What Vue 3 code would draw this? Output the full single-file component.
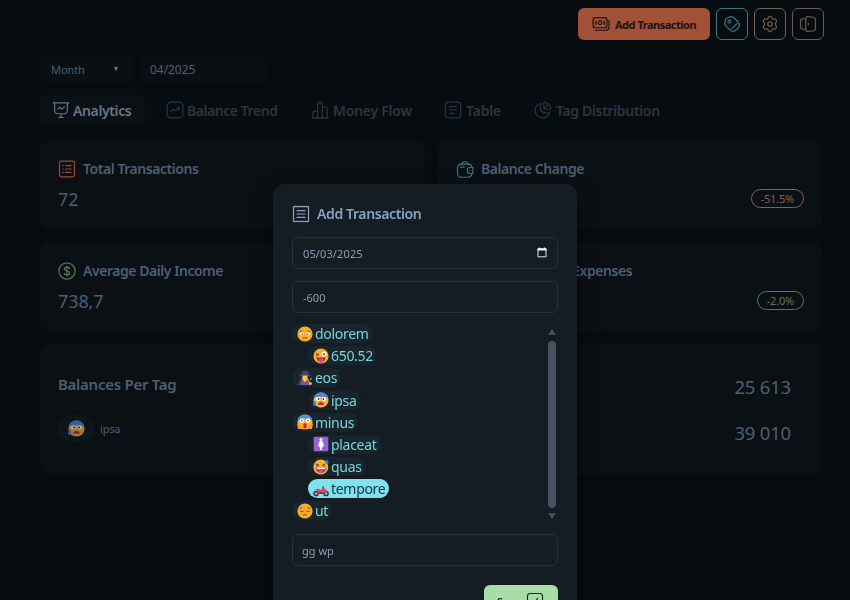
<script setup>
const tabs = [
  { label: 'Analytics', icon: 'board', cls: 'analytics active' },
  { label: 'Balance Trend', icon: 'trend', cls: 'balance' },
  { label: 'Money Flow', icon: 'bars', cls: 'money' },
  { label: 'Table', icon: 'doc', cls: 'table' },
  { label: 'Tag Distribution', icon: 'pie', cls: 'distribution' },
]
const cards = [
  { title: 'Total Transactions', icon: 'list', tone: 'orange', value: '72' },
  { title: 'Balance Change', icon: 'wallet', tone: 'cyan', value: '', delta: '-51.5%', deltaTone: 'down' },
  { title: 'Average Daily Income', icon: 'dollar', tone: 'green', value: '738,7' },
  { title: 'Average Daily Expenses', icon: 'dollar', tone: 'orange', value: '', delta: '-2.0%', deltaTone: 'up' },
]
const tags = [
  { name: 'dolorem', emoji: 'sad', level: 0 },
  { name: '650.52', emoji: 'wink', level: 1 },
  { name: 'eos', emoji: 'mage', level: 0 },
  { name: 'ipsa', emoji: 'anxious', level: 1 },
  { name: 'minus', emoji: 'scream', level: 0 },
  { name: 'placeat', emoji: 'restroom', level: 1 },
  { name: 'quas', emoji: 'sweat', level: 1 },
  { name: 'tempore', emoji: 'moto', level: 1, selected: true },
  { name: 'ut', emoji: 'pensive', level: 0 },
]
</script>

<template>
  <div class="page">
    <svg class="defs" aria-hidden="true">
      <symbol id="cash" viewBox="0 0 24 24"><rect x="1.500" y="3.500" width="18.500" height="13.500" rx="3"/><path d="M4.500 20.300H18c3.500 0 4.700-1.300 4.700-4.800V7.500"/><circle cx="10.800" cy="10.300" r="2.500"/><path d="M5.300 8v4.600M16.300 8v4.600"/></symbol>
      <symbol id="tag" viewBox="0 0 24 24"><path d="M4.700 15.500C2.800 13.600 1.800 12.600 2.200 10.800L3.300 6.500C3.800 4.500 4.500 3.800 6.500 3.300L10.800 2.200C12.600 1.800 13.600 2.800 15.500 4.700L18.500 7.700C21 10.200 22 11.500 22 13.500S21 16.500 18.500 19 15.500 22 13.500 22 10.200 21 7.700 18.500Z"/><circle cx="8.600" cy="8.800" r="2"/><path d="m11.500 18.500 7-7"/></symbol>
      <symbol id="gear" viewBox="0 0 24 24"><circle cx="12" cy="12" r="3"/><path d="M9.700 3.200C10 2.200 11 2 12 2s2 .2 2.300 1.200c.3 1 .1 1.600 1 2.100.9.500 1.500.1 2.400-.2 1.100-.4 1.700.3 2.300 1.300.7 1.200 1.200 2 .4 2.900-.7.700-1.300 1-1.300 2.700s.6 2 1.300 2.700c.8.900.3 1.700-.4 2.900-.6 1-1.200 1.700-2.300 1.300-.9-.3-1.500-.7-2.400-.2-.9.500-.7 1.100-1 2.100C14 21.800 13 22 12 22s-2-.2-2.300-1.200c-.3-1-.1-1.600-1-2.100-.9-.5-1.500-.1-2.400.2-1.100.4-1.700-.3-2.300-1.300-.7-1.200-1.200-2-.4-2.900.7-.7 1.300-1 1.300-2.700s-.6-2-1.300-2.700c-.8-.9-.3-1.700.4-2.900.6-1 1.200-1.700 2.300-1.300.9.300 1.500.7 2.400.2.900-.5.700-1.100 1-2.100Z"/></symbol>
      <symbol id="door" viewBox="0 0 24 24"><path d="M9 6c0-2.300 0-3 1.200-3.600 1-.5 2.300-.3 4.900 0l2.200.3C20.500 3.100 22 3.700 22 6.500v11c0 2.800-1.500 3.400-4.700 3.800l-2.200.3c-2.600.3-3.900.5-4.900 0C9 21 9 20.300 9 18Z"/><path d="M9 5H6C3 5 2 6 2 9v6c0 3 1 4 4 4h3M12.500 11v2"/></symbol>
      <symbol id="board" viewBox="0 0 24 24"><path d="M1.500 2.500h21M3.500 2.500V12c0 4 1 5 5 5h7c4 0 5-1 5-5V2.500M12 17v4.500M9 22h6M7.500 10.800 10 8.500l3 2.300 3.500-2.800"/></symbol>
      <symbol id="trend" viewBox="0 0 24 24"><rect x="1.500" y="1.500" width="21" height="21" rx="5"/><path d="m6.500 14 3-3 3.500 2.500 4.500-4M14.500 9h3v3"/></symbol>
      <symbol id="bars" viewBox="0 0 24 24"><path d="M1 22.500h22M2.500 22.500v-7c0-1.500.5-2 2-2H7c1.200 0 1.800.5 1.800 2v7M8.800 22.500V4c0-2 .5-2.500 3.200-2.500s3.200.5 3.200 2.500v18.500M15.200 22.500V10c0-1.500.6-2 2-2h2.300c1.500 0 2 .5 2 2v12.500"/></symbol>
      <symbol id="doc" viewBox="0 0 24 24"><rect x="1.800" y="1.500" width="20.400" height="21" rx="4.500"/><path d="M7.500 7.500h9M7.500 12h9M7.500 16.500h6"/></symbol>
      <symbol id="pie" viewBox="0 0 24 24"><path d="M9 3.300C4.800 4.500 1.500 8 1.500 12.500c0 5.500 4.500 10 10 10 4.500 0 8.300-3 9.500-7.500-1 1-2.500 1-4.500 1-4.500 0-7.500-2-7.500-6.500ZM13 3c0-1 .7-1.500 2-1.200 3 .6 6.200 3.500 7.200 7.200.3 1.500 0 2-1.200 2h-5c-2 0-3-1-3-3Z"/><path d="M14 10c0-2 4-1 4-5"/></symbol>
      <symbol id="list" viewBox="0 0 24 24"><rect x="2" y="1.500" width="20" height="21" rx="2.500"/><path d="M6.500 7.500h.5M10 7.500h7.500M6.500 12h.5M10 12h7.500M6.500 16.500h.5M10 16.500h7.500"/></symbol>
      <symbol id="receipt" viewBox="0 0 24 24"><path d="M2 2.200 4 1.800l2 .6 2-.6 2 .6 2-.6 2 .6 2-.6 2 .6 2-.6 2 .4v19.600l-2 .4-2-.6-2 .6-2-.6-2 .6-2-.6-2 .6-2-.6-2 .6-2-.4ZM6.800 7.500h10.400M6.800 12h10.400M6.800 16.500h10.400"/></symbol>
      <symbol id="wallet" viewBox="0 0 24 24"><path d="M21 10V9c-.3-3-1.700-3.500-5-3.500H8C3.500 5.500 2 7 2 11v5.500C2 21.500 3.500 23 8 23h7c4 0 6-1 6-5M22.500 10h-4c-2 0-3.500 1.700-3.500 4s1.500 4 3.500 4h4ZM6 9.500h5M6.500 5.500 10 2.800c1.500-1.200 2.500-1.200 4 0l3.500 2.700M18.500 14h.1"/></symbol>
      <symbol id="dollar" viewBox="0 0 24 24"><circle cx="12" cy="12" r="10.800"/><path d="M12 5.500v13M15.500 9c0-1.500-1.500-2.200-3.500-2.200S8.500 7.800 8.500 9.400c0 3.600 7 1.600 7 5.200 0 1.600-1.500 2.600-3.500 2.600S8.500 16.400 8.500 15"/></symbol>
      <symbol id="check" viewBox="0 0 24 24"><rect x="2" y="2" width="20" height="20" rx="3.500"/><path d="m8.500 12.500 2.500 3 4.500-7"/></symbol>

      <symbol id="sad" viewBox="0 0 16 16"><circle cx="8" cy="8" r="7.600" fill="#fcae2b"/><ellipse cx="4.800" cy="8" rx="1.900" ry="1.400" fill="#fff"/><ellipse cx="11.200" cy="8" rx="1.900" ry="1.400" fill="#fff"/><circle cx="5.200" cy="8.300" r=".7" fill="#503a38"/><circle cx="10.800" cy="8.300" r=".7" fill="#503a38"/><path d="M2.500 6 5.500 4.500M10.500 4.500l3 1.500M5.500 12.200q2.500-1.200 5 0" stroke="#704330" fill="none" stroke-width=".9"/></symbol>
      <symbol id="wink" viewBox="0 0 16 16"><circle cx="8" cy="8" r="7.600" fill="#fcae2b"/><circle cx="11" cy="6" r="2.500" fill="#fff"/><circle cx="11" cy="6.200" r="1" fill="#443"/><path d="m3 5.500 3 1-3 1.200" stroke="#654036" fill="none"/><path d="M3.500 9.500h9c-.5 3-2 4.500-4.500 4.500S4 12.500 3.500 9.500" fill="#762c4b"/><path d="M5.500 10.500h5v3q-2.500 2.800-5 0Z" fill="#f13d94"/></symbol>
      <symbol id="mage" viewBox="0 0 16 16"><path d="M4 4.500 5.500 1 11 .8l1 3.700 2 .8v1H2v-1ZM4 7l2 0-1 8H0l3-4Z" fill="#4d3e68"/><path d="M5.500 5.500h5V10L8 12.500 5.500 10Z" fill="#ffc83d"/><path d="m5 10 3 2.500 2.500-2L12 15H3.500Z" fill="#7c53b0"/><path d="m10 8 2.500 5" stroke="#d09039" stroke-width="1.500"/><circle cx="13.800" cy="9" r="1.100" fill="#25aaf4"/><circle cx="13.300" cy="13.500" r="1.600" fill="#f4b34b"/></symbol>
      <symbol id="anxious" viewBox="0 0 16 16"><circle cx="8" cy="8" r="7.600" fill="#fcaf2d"/><path d="M.8 6C2-1.500 14-1.500 15.200 6 12 4.200 4 4.200.8 6" fill="#4d83e3"/><ellipse cx="5" cy="7" rx="2.300" ry="1.900" fill="#fff"/><ellipse cx="11" cy="7" rx="2.300" ry="1.900" fill="#fff"/><circle cx="5.600" cy="7" r=".9" fill="#433"/><circle cx="10.400" cy="7" r=".9" fill="#433"/><path d="M5 13c0-4 6-4 6 0Z" fill="#a93250"/><path d="M1.500 8.500c2.300 3 1.700 5.500 0 5.500S-.6 11.500 1.500 8.500" fill="#3b82e9"/></symbol>
      <symbol id="scream" viewBox="0 0 16 16"><circle cx="8" cy="8" r="7.600" fill="#fcae2b"/><path d="M.6 7C1-1.500 15-1.500 15.400 7 12 4 4 4 .6 7" fill="#4c94df"/><circle cx="5" cy="6.500" r="2.200" fill="#fff"/><circle cx="11" cy="6.500" r="2.200" fill="#fff"/><circle cx="5" cy="6.500" r=".7" fill="#433"/><circle cx="11" cy="6.500" r=".7" fill="#433"/><ellipse cx="8" cy="11.800" rx="1.800" ry="2.700" fill="#b42c63"/><path d="m0 9.500 3 1.500 2 4H1ZM16 9.500 13 11l-2 4h4Z" fill="#ff9130"/></symbol>
      <symbol id="restroom" viewBox="0 0 16 16"><rect x=".7" y=".7" width="14.600" height="14.600" rx="1.200" fill="#9265cf"/><circle cx="8" cy="3.400" r="1.500" fill="#fff"/><path d="M6.500 5.200h3L11 10l-1 .4-.8-2 .6 2.800h-.9V14H7.100v-2.800h-.9l.6-2.800-.8 2L5 10Z" fill="#fff"/></symbol>
      <symbol id="sweat" viewBox="0 0 16 16"><circle cx="7.800" cy="8" r="7.500" fill="#fcae2b"/><path d="m3 5 3 1.200L3 7.500M12 5 9.500 6.200l2.500 1.300" stroke="#654036" fill="none"/><path d="M3 9h10c-.4 3-2 4.800-5 4.800S3.400 12 3 9" fill="#8a245c"/><path d="M4 9h8v1.300H4Z" fill="#fff"/><path d="M5 12q3-2 6 0-3 3-6 0" fill="#f13d94"/><path d="M14 .2c2.400 3 1.600 5 .1 5S12 3.200 14 .2" fill="#3b72e9"/></symbol>
      <symbol id="moto" viewBox="0 0 16 16"><circle cx="3" cy="12.500" r="2.200" fill="#8aa0ab" stroke="#35353f" stroke-width="1.300"/><circle cx="13" cy="12.500" r="2.200" fill="#8aa0ab" stroke="#35353f" stroke-width="1.300"/><path d="M2 8h4l2 1 2-3 2 2 3 2.500-2 .5-3-1-1 3H6L4 9.500Z" fill="#f23d57"/><path d="M6 11h4v2H6Z" fill="#5d4458"/><path d="M9 6h2" stroke="#433"/></symbol>
      <symbol id="pensive" viewBox="0 0 16 16"><circle cx="8" cy="8" r="7.600" fill="#fcae2b"/><path d="m2.500 5.800 2.700-1.300M10.800 4.500l2.700 1.300M3 8q1.700 1.300 3.500 0M9.500 8q1.800 1.300 3.500 0M6.200 12q1.800-.7 3.600 0" stroke="#674334" fill="none" stroke-width=".9"/></symbol>
    </svg>

    <header class="toolbar">
      <button class="add"><svg class="icon"><use href="#cash"/></svg><span>Add Transaction</span></button>
      <button class="square cyan"><svg class="icon"><use href="#tag"/></svg></button>
      <button class="square gold"><svg class="icon"><use href="#gear"/></svg></button>
      <button class="square rose"><svg class="icon"><use href="#door"/></svg></button>
    </header>

    <main>
      <div class="filters">
        <div class="select"><span>Month</span><i class="caret"></i></div>
        <div class="period">04/2025</div>
      </div>
      <nav class="tabs">
        <div v-for="t in tabs" :key="t.label" class="tab" :class="t.cls">
          <svg class="icon"><use :href="'#' + t.icon"/></svg><span>{{ t.label }}</span>
        </div>
      </nav>
      <section class="grid">
        <article v-for="c in cards" :key="c.title" class="card">
          <h3><svg class="icon" :class="c.tone"><use :href="'#' + c.icon"/></svg><span>{{ c.title }}</span></h3>
          <div class="figures">
            <span class="value">{{ c.value }}</span>
            <span v-if="c.delta" class="delta" :class="c.deltaTone">{{ c.delta }}</span>
          </div>
        </article>
        <article class="card balances">
          <div class="line"><h2>Balances Per Tag</h2><span class="value">25 613</span></div>
          <div class="line">
            <div class="owner"><span class="avatar"><svg class="emoji"><use href="#anxious"/></svg></span><span>ipsa</span></div>
            <span class="value">39 010</span>
          </div>
        </article>
      </section>
    </main>

    <div class="overlay">
      <form class="modal" @submit.prevent>
        <h3 class="heading"><svg class="icon"><use href="#receipt"/></svg><span>Add Transaction</span></h3>
        <div class="field date"><span>05/03/2025</span>
          <svg class="calendar" viewBox="0 0 10 11"><path d="M1 1.800h8v8H1Z" fill="none" stroke="#e6e6e6" stroke-width="1"/><path d="M.5 1.500h9v2h-9ZM2 .4h1v2H2ZM7 .4h1v2H7Z" fill="#f2f2f2"/></svg>
        </div>
        <div class="field amount">-600</div>
        <div class="picker">
          <ul>
            <li v-for="t in tags" :key="t.name" :class="{ child: t.level, selected: t.selected }">
              <span class="chip"><svg class="emoji"><use :href="'#' + t.emoji"/></svg><span>{{ t.name }}</span></span>
            </li>
          </ul>
          <div class="scroll"><i class="up-arrow"></i><i class="thumb"></i><i class="down-arrow"></i></div>
        </div>
        <div class="field note">gg wp</div>
        <button class="save"><span>Save</span><svg class="icon"><use href="#check"/></svg></button>
      </form>
    </div>
  </div>
</template>

<style>
body { background: #070c10; overflow: hidden; }
</style>

<style scoped>
* { box-sizing: border-box; }
.page { height: 600px; overflow: hidden; background: #070c10; color: #4c5f74; font-family: "Noto Sans", "Open Sans", sans-serif; }
.defs { position: absolute; width: 0; height: 0; }
.icon { width: 18px; height: 18px; fill: none; stroke: currentColor; stroke-width: 1.6; stroke-linecap: round; stroke-linejoin: round; flex: none; }
.emoji { width: 16px; height: 16px; flex: none; }
button { font-family: inherit; margin: 0; }
h2, h3 { margin: 0; font-weight: 600; }
.toolbar { display: flex; justify-content: flex-end; gap: 6px; height: 40px; padding: 8px 26px 0 0; }
.add { width: 132px; height: 32px; display: flex; align-items: center; padding: 0 0 0 14px; gap: 5px; border: 0; border-radius: 6px; background: #a05137; color: #1d110e; font-size: 11px; font-weight: 700; letter-spacing: -0.49px; white-space: nowrap; }
.square { width: 32px; height: 32px; padding: 0; display: flex; align-items: center; justify-content: center; background: none; border: 1px solid; border-radius: 6px; }
.cyan { color: #397783; }
.gold { color: #74624c; }
.rose { color: #705752; }
.orange { color: #984a31; }
.green { color: #587758; }
main { padding: 15px 28px 0 40px; }
.filters { display: flex; gap: 9px; height: 28px; }
.select, .period { background: #090f13; border-radius: 6px; display: flex; align-items: center; }
.select { width: 92px; justify-content: space-between; padding: 0 14px 0 11px; font-size: 11px; }
.select span { letter-spacing: -0.1px; }
.caret { border: 2.5px solid transparent; border-top: 4px solid #74818c; border-bottom: 0; }
.period { width: 125px; padding: 1px 9px 0; font-size: 12px; letter-spacing: -0.05px; }
.tabs { display: flex; margin-top: 12px; height: 30px; }
.tab { height: 30px; display: flex; align-items: center; gap: 3px; padding-left: 12px; border-radius: 6px; font-size: 14px; font-weight: 600; color: #293641; white-space: nowrap; letter-spacing: -0.4px; }
.tab.active { background: #0a1014; color: #627788; }
.analytics { width: 105px; margin-right: 9px; }
.analytics { letter-spacing: -0.38px; }
.balance { width: 136px; margin-right: 10px; letter-spacing: -0.45px; }
.money { width: 122px; margin-right: 12px; padding-left: 11px; gap: 4px; letter-spacing: -0.25px; }
.table { width: 76px; margin-right: 12px; padding-left: 10px; gap: 4px; letter-spacing: -0.2px; }
.distribution { width: 145px; gap: 4px; letter-spacing: -0.34px; }
.grid { display: grid; grid-template-columns: 385px 384px; gap: 13px; margin-top: 15px; }
.card { height: 89px; border-radius: 10px; background: #0b1014; padding: 19px 18px; }
.card h3 { display: flex; align-items: center; height: 20px; gap: 7px; font-size: 14px; letter-spacing: -0.45px; white-space: nowrap; }
.card h3 span { padding-bottom: 2px; }
.figures { height: 22px; margin-top: 9px; display: flex; align-items: center; justify-content: space-between; }
.value { font-size: 18px; letter-spacing: -0.1px; line-height: 22px; }
.delta { height: 19px; margin-top: -2px; border: 1px solid; border-radius: 10px; font-size: 11px; line-height: 18px; padding: 0 9px; letter-spacing: -0.2px; }
.down { color: #80605a; }
.up { color: #587758; }
.balances { grid-column: 1 / 3; height: 130px; padding: 20px 31px 0 18px; }
.line .value { font-size: 18.500px; letter-spacing: -0.2px; }
.line { height: 44px; display: flex; align-items: center; justify-content: space-between; border-top: 1px solid #0c1216; }
.line + .line { height: 48px; }
h2 { font-size: 15px; letter-spacing: -0.27px; margin-top: -5px; }
.owner { display: flex; align-items: center; gap: 6px; font-size: 11px; letter-spacing: -0.2px; margin-top: -9px; }
.avatar { width: 36px; height: 27px; border-radius: 14px; background: #0d161a; display: flex; align-items: center; justify-content: center; }
.avatar .emoji { opacity: .65; width: 17px; height: 17px; }

.overlay { position: fixed; inset: 0; display: flex; justify-content: center; align-items: flex-start; padding-top: 184px; }
.modal { width: 304px; height: 440px; flex: none; background: #141c24; border-radius: 12px; padding: 20px 19px; box-shadow: 0 10px 25px rgba(0, 0, 0, .35); color: #8c9fb5; }
.heading { height: 20px; display: flex; align-items: center; gap: 7px; font-size: 14px; color: #8ba3c0; letter-spacing: -0.38px; }
.heading span { padding-bottom: 2px; }
.field { height: 32px; border: 1px solid #25323c; border-radius: 6px; padding: 0 10px; display: flex; align-items: center; font-size: 11px; letter-spacing: 0; }
.date { margin-top: 13px; justify-content: space-between; }
.date span { letter-spacing: 0.12px; }
.calendar { width: 10px; height: 11px; margin-top: -1px; }
.amount { margin-top: 12px; }
.picker { margin-top: 10px; height: 200px; display: flex; justify-content: space-between; }
ul { list-style: none; margin: -0.5px 0 0; padding: 0; }
li { height: 22.170px; display: flex; align-items: center; }
.child { padding-left: 16px; }
.chip { height: 19px; display: inline-flex; align-items: center; padding: 0 4px 0 5px; gap: 2px; border-radius: 10px; background: #18252c; color: #78d5de; font-size: 14px; letter-spacing: -0.3px; line-height: 19px; }
.selected .chip { background: #80e2ee; color: #16333c; }
.scroll { width: 12px; padding-top: 6px; display: flex; flex-direction: column; align-items: center; }
.up-arrow { border: 4px solid transparent; border-top: 0; border-bottom: 6px solid #43525e; }
.thumb { width: 8px; height: 167px; margin: 6px 0 5px; border-radius: 4px; background: #43525e; }
.down-arrow { border: 4px solid transparent; border-bottom: 0; border-top: 6px solid #43525e; }
.note { margin-top: 11px; padding-left: 9px; }
.save { width: 74px; height: 32px; margin: 19px 0 0 auto; display: flex; align-items: center; gap: 5px; padding: 0 0 0 13px; background: #a9dda8; color: #152d20; border: 0; border-radius: 6px; font-size: 11px; font-weight: 600; letter-spacing: -0.3px; }
.save .icon { margin-top: -1px; }
</style>
